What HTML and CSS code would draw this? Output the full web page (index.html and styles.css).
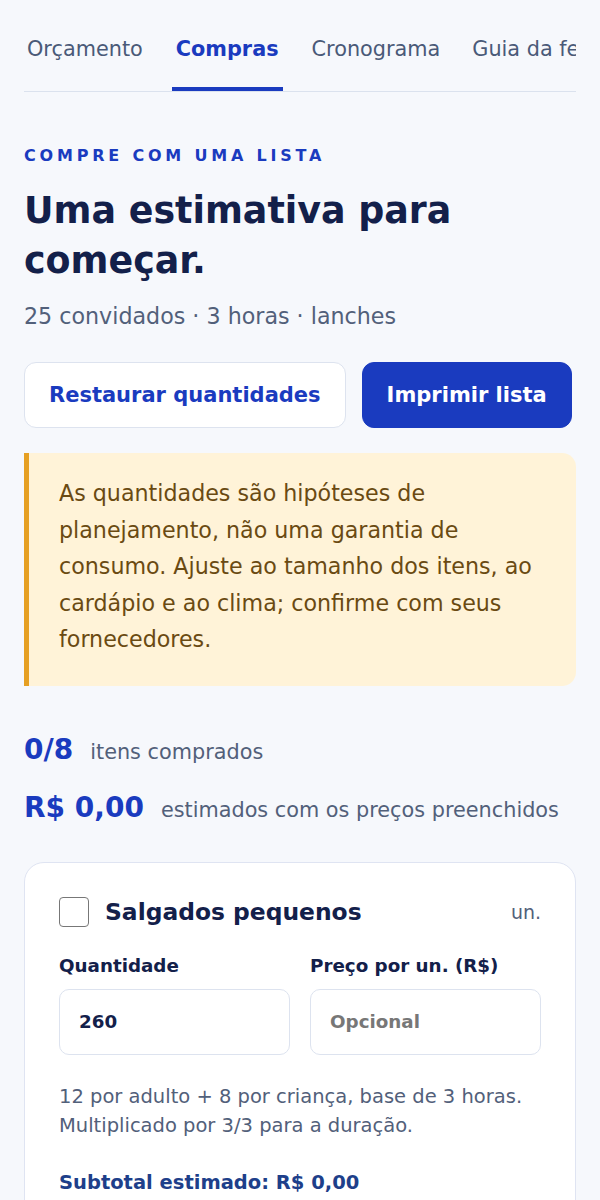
FILE: index.html
```html
<!DOCTYPE html>
<html lang="pt-BR">
<head>
  <meta charset="UTF-8">
  <title>Compras</title>
  <link rel="stylesheet" href="styles.css">
</head>
<body>
  <div class="page">
    <nav class="tabs">
      <a class="tab">Orçamento</a>
      <a class="tab active">Compras</a>
      <a class="tab">Cronograma</a>
      <a class="tab">Guia da festa</a>
    </nav>

    <section class="intro">
      <p class="eyebrow">Compre com uma lista</p>
      <h1>Uma estimativa para começar.</h1>
      <p class="meta">25 convidados · 3 horas · lanches</p>
    </section>

    <div class="actions">
      <button class="btn btn-outline">Restaurar quantidades</button>
      <button class="btn btn-primary">Imprimir lista</button>
    </div>

    <div class="notice">
      As quantidades são hipóteses de planejamento, não uma garantia de consumo. Ajuste ao tamanho dos itens, ao cardápio e ao clima; confirme com seus fornecedores.
    </div>

    <div class="stats">
      <div class="stat"><strong>0/8</strong><span>itens comprados</span></div>
      <div class="stat"><strong>R$ 0,00</strong><span>estimados com os preços preenchidos</span></div>
    </div>

    <div class="item-card">
      <div class="item-head">
        <span class="check"></span>
        <h3>Salgados pequenos</h3>
        <span class="unit">un.</span>
      </div>
      <div class="fields">
        <label class="field">
          <span>Quantidade</span>
          <input type="text" value="260">
        </label>
        <label class="field">
          <span>Preço por un. (R$)</span>
          <input type="text" placeholder="Opcional">
        </label>
      </div>
      <p class="hint">12 por adulto + 8 por criança, base de 3 horas. Multiplicado por 3/3 para a duração.</p>
      <p class="subtotal">Subtotal estimado: R$ 0,00</p>
    </div>
  </div>
</body>
</html>
```

FILE: styles.css
```css
* {
  box-sizing: border-box;
}
body {
  margin: 0;
  background-color: #f6f8fc;
  font-family: "DejaVu Sans", sans-serif;
  color: #13204a;
}
.page {
  padding: 25px 24px 40px;
}
.tabs {
  display: flex;
  gap: 26px;
  overflow: hidden;
  white-space: nowrap;
  border-bottom: 1px solid #dbe2ee;
}
.tab {
  flex: none;
  padding: 12px 3px 26px;
  font-size: 20.8px;
  line-height: 24px;
  color: #4a5a78;
  border-bottom: 4px solid transparent;
}
.tab.active {
  padding: 12px 4px 26px;
  color: #1a3bbf;
  font-weight: bold;
  border-bottom-color: #1a3bbf;
}
.intro {
  padding-top: 54px;
}
.eyebrow {
  margin: 0;
  font-size: 16px;
  line-height: 20px;
  font-weight: bold;
  letter-spacing: 3.8px;
  text-transform: uppercase;
  color: #1a3bbf;
}
h1 {
  margin: 20px 0 0;
  font-size: 36.4px;
  line-height: 50px;
  font-weight: bold;
  color: #13204a;
}
.meta {
  margin: 15px 0 0;
  font-size: 22.2px;
  line-height: 30px;
  color: #52607a;
}
.actions {
  display: flex;
  gap: 16px;
  margin-top: 31px;
}
.btn {
  height: 66px;
  padding: 0 24px;
  font-family: inherit;
  font-size: 21px;
  font-weight: bold;
  border-radius: 12px;
  cursor: pointer;
}
.btn-outline {
  background-color: #fff;
  color: #1a3bbf;
  border: 1px solid #dde3ef;
}
.btn-primary {
  background-color: #1a3bbf;
  color: #fff;
  border: 1px solid #1a3bbf;
}
.notice {
  margin-top: 25px;
  padding: 22px 30px 28px 30px;
  background-color: #fff3d8;
  border-left: 5px solid #e6a023;
  border-radius: 0 14px 14px 0;
  font-size: 22.2px;
  line-height: 36.5px;
  color: #6a4a12;
}
.stats {
  margin-top: 44px;
  display: flex;
  flex-direction: column;
  gap: 16px;
}
.stat {
  display: flex;
  align-items: baseline;
  gap: 17px;
  line-height: 40px;
}
.stat strong {
  font-size: 28px;
  color: #1a3bbf;
}
.stat span {
  font-size: 20.8px;
  color: #52607a;
}
.item-card {
  margin-top: 32px;
  padding: 34px 34px 30px;
  background-color: #fff;
  border: 1px solid #dfe4f2;
  border-radius: 20px;
}
.item-head {
  display: flex;
  align-items: center;
  gap: 16px;
}
.check {
  width: 30px;
  height: 30px;
  border: 1.5px solid #777;
  border-radius: 4px;
  flex: none;
}
.item-head h3 {
  flex: 1;
  margin: 0;
  font-size: 23.4px;
  line-height: 30px;
}
.unit {
  font-size: 19px;
  color: #52607a;
}
.fields {
  display: grid;
  grid-template-columns: 1fr 1fr;
  gap: 20px;
  margin-top: 27px;
}
.field {
  display: flex;
  flex-direction: column;
  gap: 11px;
  min-width: 0;
}
.field span {
  font-size: 18.3px;
  line-height: 24px;
  font-weight: bold;
}
.field input {
  width: 100%;
  min-width: 0;
  height: 66px;
  padding: 0 19px;
  border: 1px solid #dde3ef;
  border-radius: 10px;
  font-family: inherit;
  font-size: 18.3px;
  font-weight: bold;
  color: #13204a;
  background-color: #fff;
}
.field input::placeholder {
  color: #777;
}
.hint {
  margin: 27px 0 0;
  font-size: 19.5px;
  line-height: 29px;
  color: #52607a;
}
.subtotal {
  margin: 30px 0 0;
  font-size: 19.5px;
  line-height: 26px;
  font-weight: bold;
  color: #1e3f8a;
}
```
